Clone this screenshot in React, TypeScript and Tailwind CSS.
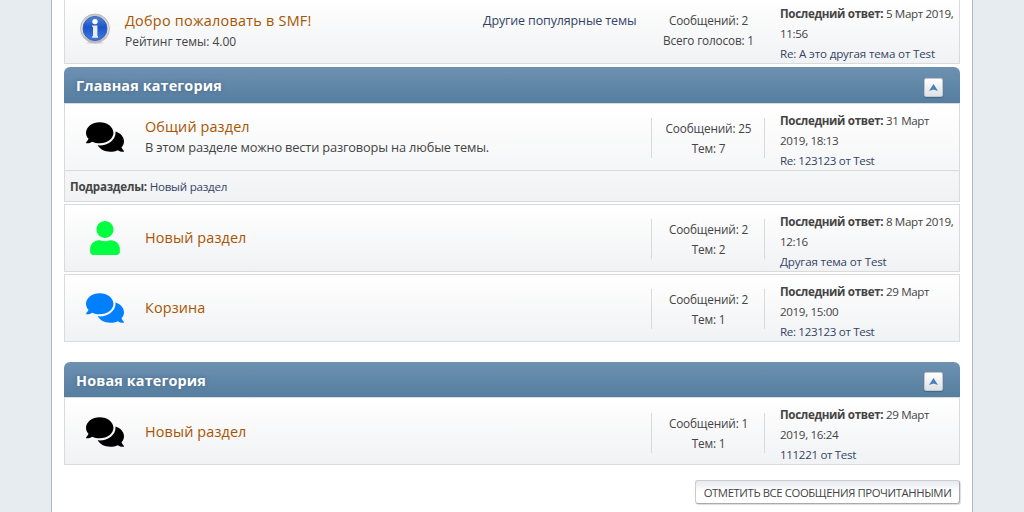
import React from "react";
import { FaComments, FaUser } from "react-icons/fa";

type LastPost = { date: string; rest: string; link: string; wordy?: boolean };

function InfoIcon() {
  return (
    <svg width="32" height="32" viewBox="0 0 32 32">
      <defs>
        <linearGradient id="ring" x1="0" y1="0" x2="0" y2="1">
          <stop offset="0" stopColor="#c4c4c4" />
          <stop offset="0.5" stopColor="#e6e6e6" />
          <stop offset="1" stopColor="#b5afba" />
        </linearGradient>
        <linearGradient id="disc" x1="0" y1="0" x2="0" y2="1">
          <stop offset="0" stopColor="#4f86d8" />
          <stop offset="0.45" stopColor="#1b55cc" />
          <stop offset="1" stopColor="#3d7be0" />
        </linearGradient>
      </defs>
      <ellipse cx="16" cy="29.8" rx="9" ry="1.3" fill="#dddde0" />
      <circle cx="16" cy="15.5" r="14.5" fill="url(#ring)" stroke="#bfbcc2" strokeWidth="1" />
      <circle cx="16" cy="15.5" r="12" fill="url(#disc)" stroke="#3f62b4" strokeWidth="1" />
      <circle cx="16" cy="8.6" r="2.7" fill="#fff" />
      <path d="M13.2 12.5H18.4V23H19V24.8H13.2V23H14V14H13.2Z" fill="#ecebe9" />
    </svg>
  );
}

function Stats({ a, b, lines = true }: { a: string; b: string; lines?: boolean }) {
  return (
    <div
      className={
        "h-10 w-[114px] shrink-0 border-x pl-px text-center text-[11.8px] leading-5 tracking-[-0.17px] " +
        (lines ? "mt-[14px] border-[#d9d9d9]" : "mt-[13px] border-transparent")
      }
    >
      <div className="whitespace-nowrap">{a}</div>
      <div className="-mx-2 whitespace-nowrap">{b}</div>
    </div>
  );
}

function Last({ date, rest, link, wordy }: LastPost) {
  return (
    <div className="mt-[7px] ml-[15px] w-[179px] shrink-0 text-[11.6px] leading-5 tracking-[-0.34px] whitespace-nowrap">
      <div>
        <b>Последний ответ:</b> {date}
      </div>
      <div>{rest}</div>
      <div className={"text-[#334466] " + (wordy ? "tracking-[-0.16px]" : "")}>{link}</div>
    </div>
  );
}

function Board({
  icon,
  title,
  desc,
  stats,
  last,
  sub,
  low,
}: {
  icon: React.ReactNode;
  title: string;
  desc?: string;
  stats: [string, string];
  last: LastPost;
  sub?: string;
  low?: boolean;
}) {
  return (
    <div className="border border-[#d9dadb] bg-linear-to-b from-white to-[#f1f2f4]">
      <div className={"flex h-[66px] " + (low ? "pt-px" : "")}>
        <div className={"flex w-20 shrink-0 items-center justify-center " + (low ? "pt-px" : "")}>{icon}</div>
        <div className={"flex-1 " + (desc ? "pt-[13px]" : "pt-[23px]")}>
          <div className="text-[14.4px] leading-5 tracking-[0.14px] text-[#a85400]">{title}</div>
          {desc && <div className="text-[12.8px] leading-5 tracking-[-0.16px] whitespace-nowrap">{desc}</div>}
        </div>
        <Stats a={stats[0]} b={stats[1]} />
        <div className={low ? "-mt-px" : ""}>
          <Last {...last} />
        </div>
      </div>
      {sub && (
        <div className="h-[31px] border-t border-[#d9dadb] pl-[5px] text-[11.6px] leading-[31px] tracking-[-0.24px]">
          <b>Подразделы:</b> <span className="text-[#334466]">{sub}</span>
        </div>
      )}
    </div>
  );
}

function CategoryBar({ title, tall }: { title: string; tall?: boolean }) {
  return (
    <div
      className={
        "flex items-center justify-between rounded-t-[6px] bg-linear-to-b from-[#6e91b0] to-[#557ea0] pr-[17px] pl-3 " +
        (tall ? "h-9" : "h-[35px]")
      }
    >
      <h3 className="pt-0.5 text-[14.4px] leading-5 font-bold tracking-[0.14px] text-white [text-shadow:0_0_4px_#446688]">
        {title}
      </h3>
      <div
        className={
          "flex h-[19px] w-[19px] items-center justify-center rounded-[2px] border border-[#c3c6c9] bg-linear-to-b from-white to-[#dfe1e4] shadow-[0_1px_1px_#3f6687] " +
          (tall ? "mt-[5px]" : "mt-1")
        }
      >
        <svg width="9" height="7" viewBox="0 0 9 7">
          <path d="M4.5 0 9 7 4.5 5.5 0 7Z" fill="#4a7dba" />
        </svg>
      </div>
    </div>
  );
}

export default function App() {
  return (
    <div className="flex h-[512px] w-[1024px] justify-center overflow-hidden bg-[#e7ecf0] font-['Open_Sans','Noto_Sans',sans-serif] text-[#444]">
      <main className="h-[512px] w-[922px] border-x border-[#b8b8b8] bg-white px-3">
        <div className="-mt-1 flex h-[68px] border border-[#d9dadb] bg-linear-to-b from-white to-[#f1f2f4]">
          <div className="flex w-[60px] shrink-0 justify-center pt-4">
            <InfoIcon />
          </div>
          <div className="flex-1 pt-[14px]">
            <div className="text-[14.4px] leading-5 tracking-[0.26px] text-[#a85400]">Добро пожаловать в SMF!</div>
            <div className="pt-px text-[12px] leading-5">Рейтинг темы: 4.00</div>
          </div>
          <div className="w-[168px] shrink-0 pt-[14px] text-[12.5px] leading-5 tracking-[-0.14px] text-[#334466]">
            Другие популярные темы
          </div>
          <Stats a="Сообщений: 2" b="Всего голосов: 1" lines={false} />
          <Last date="5 Март 2019," rest="11:56" link="Re: А это другая тема от Test" wordy />
        </div>

        <section className="mt-[3px] flex flex-col">
          <CategoryBar title="Главная категория" tall />
          <div className="flex flex-col gap-0.5">
            <Board
              icon={<FaComments className="h-[34px] w-[38px] text-black" />}
              title="Общий раздел"
              desc="В этом разделе можно вести разговоры на любые темы."
              stats={["Сообщений: 25", "Тем: 7"]}
              last={{ date: "31 Март", rest: "2019, 18:13", link: "Re: 123123 от Test" }}
              sub="Новый раздел"
            />
            <Board
              icon={<FaUser className="h-[34px] w-[30px] text-[#00ff40]" />}
              title="Новый раздел"
              stats={["Сообщений: 2", "Тем: 2"]}
              last={{ date: "8 Март 2019,", rest: "12:16", link: "Другая тема от Test", wordy: true }}
            />
            <Board
              icon={<FaComments className="h-[34px] w-[38px] text-[#0080ff]" />}
              title="Корзина"
              stats={["Сообщений: 2", "Тем: 1"]}
              last={{ date: "29 Март", rest: "2019, 15:00", link: "Re: 123123 от Test" }}
            />
          </div>
        </section>

        <section className="mt-5">
          <CategoryBar title="Новая категория" />
          <Board
            icon={<FaComments className="h-[34px] w-[38px] text-black" />}
            title="Новый раздел"
            stats={["Сообщений: 1", "Тем: 1"]}
            last={{ date: "29 Март", rest: "2019, 16:24", link: "111221 от Test" }}
            low
          />
        </section>

        <div className="mt-[15px] flex justify-end">
          <button className="h-6 w-[265px] rounded-[3px] border border-[#ccc] border-r-[#aaa] border-b-[#aaa] bg-linear-to-b from-[#e6ebf0] to-white to-50% text-center text-[11.3px] leading-[23px] tracking-[-0.39px] whitespace-nowrap shadow-[1px_1px_1px_#ddd]">
            ОТМЕТИТЬ ВСЕ СООБЩЕНИЯ ПРОЧИТАННЫМИ
          </button>
        </div>
      </main>
    </div>
  );
}
